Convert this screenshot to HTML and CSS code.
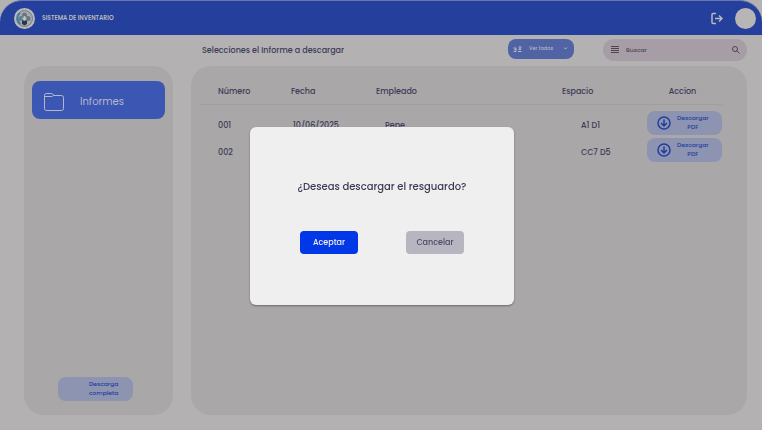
FILE: index.html
```html
<!DOCTYPE html>
<html lang="es">
<head>
<meta charset="utf-8">
<meta name="viewport" content="width=device-width, initial-scale=1">
<title>Sistema de Inventario</title>
<link rel="stylesheet" href="styles.css">
</head>
<body>
<header class="topbar">
  <svg class="logo" viewBox="0 0 42 42" aria-hidden="true">
    <circle cx="21" cy="21" r="21" fill="#bbb9ba"/>
    <circle cx="21" cy="21" r="16" fill="#a7abae" stroke="#6d7c87" stroke-width="2"/>
    <path d="M13 32A14 14 0 0 1 12 10" fill="none" stroke="#267da0" stroke-width="3"/>
    <circle cx="21" cy="14" r="5" fill="#687680"/>
    <circle cx="14" cy="21" r="5" fill="#5f7f8c"/>
    <circle cx="28" cy="21" r="5" fill="#687680"/>
    <path d="M16 25h10v7l-5 3-5-3z" fill="#26364c"/>
    <path d="M21 16v9M17 21h8" stroke="#c4c5c6" stroke-width="3"/>
  </svg>
  <h1 class="brand">SISTEMA DE INVENTARIO</h1>
  <button class="logout" type="button" aria-label="Salir">
    <svg viewBox="0 0 24 24" fill="none" stroke="currentColor" stroke-width="3"><path d="M10 2H4Q2 2 2 4v16q0 2 2 2h6M8 12h14M16 6l6 6-6 6"/></svg>
  </button>
  <span class="avatar"></span>
</header>
<div class="toolbar">
  <h2 class="title">Selecciones el Informe a descargar</h2>
  <label class="filter">
    <svg class="filter-icon" viewBox="0 0 18 12" fill="none" stroke="currentColor" stroke-width="2"><path d="M1 4h5v3H3h3v4H1M10 11h7M11 7h5"/><circle cx="14" cy="3" r="2"/></svg>
    <select class="filter-select" aria-label="Filtro"><option>Ver todos</option></select>
    <svg class="chevron" viewBox="0 0 10 6" fill="none" stroke="currentColor" stroke-width="2"><path d="M2 1l3 3 3-3"/></svg>
  </label>
  <label class="search">
    <svg class="menu-icon" viewBox="0 0 16 14" fill="none" stroke="currentColor" stroke-width="2"><path d="M0 1h16M0 5h16M0 9h16M0 13h16"/></svg>
    <input class="search-input" type="text" placeholder="Buscar" aria-label="Buscar">
    <svg class="search-icon" viewBox="0 0 16 16" fill="none" stroke="currentColor" stroke-width="2"><circle cx="6" cy="6" r="5"/><path d="M9 9l6 6"/></svg>
  </label>
</div>
<main class="layout">
  <nav class="panel sidebar">
    <a class="nav-link" href="#informes">
      <svg class="folder" viewBox="0 0 40 36" fill="none" stroke="currentColor" stroke-width="2"><path d="M1 5Q1 1 5 1h10q3 0 4 4h16q4 0 4 4v22q0 4-4 4H5q-4 0-4-4zM1 7h14q3 0 4-2"/></svg>
      Informes
    </a>
    <button class="pill full" type="button"><span>Descarga<br>completa</span></button>
  </nav>
  <section class="panel content">
    <table class="reports">
      <colgroup><col class="c-num"><col class="c-date"><col class="c-name"><col class="c-space"><col class="c-action"></colgroup>
      <thead>
        <tr><th class="num">Número</th><th>Fecha</th><th>Empleado</th><th>Espacio</th><th class="action">Accion</th></tr>
      </thead>
      <tbody>
        <tr>
          <td class="num">001</td><td class="date">10/06/2025</td><td class="name">Pepe</td><td class="space">A1 D1</td>
          <td class="action"><button class="pill" type="button"><svg class="download" viewBox="0 0 28 28" fill="none" stroke="currentColor" stroke-width="3"><circle cx="14" cy="14" r="12"/><path d="M14 7v13M8 14l6 6 6-6"/></svg><span>Descargar<br>PDF</span></button></td>
        </tr>
        <tr>
          <td class="num">002</td><td class="date">10/06/2025</td><td class="name">Pepe</td><td class="space">CC7 D5</td>
          <td class="action"><button class="pill" type="button"><svg class="download" viewBox="0 0 28 28" fill="none" stroke="currentColor" stroke-width="3"><circle cx="14" cy="14" r="12"/><path d="M14 7v13M8 14l6 6 6-6"/></svg><span>Descargar<br>PDF</span></button></td>
        </tr>
      </tbody>
    </table>
  </section>
</main>
<div class="overlay">
  <div class="modal" role="dialog" aria-modal="true" aria-labelledby="question">
    <p class="question" id="question">¿Deseas descargar el resguardo?</p>
    <div class="choices">
      <button class="choice accept" type="button">Aceptar</button>
      <button class="choice cancel" type="button">Cancelar</button>
    </div>
  </div>
</div>
</body>
</html>
```
FILE: styles.css
```css
* { box-sizing: border-box; }
body {
  margin: 0;
  min-height: 100vh;
  display: flex;
  flex-direction: column;
  background: #b3b1b2;
  color: #3c3b56;
  font: 500 8px/12px Poppins, Inter, sans-serif;
}
button, input, select { font: inherit; color: inherit; border: 0; margin: 0; }
button { cursor: pointer; }
svg { display: block; flex: none; }

.topbar {
  display: flex;
  align-items: center;
  height: 35px;
  padding: 0 6px 0 14px;
  background: #243f9c;
  border-top: 1px solid #6777ae;
  border-radius: 22px 22px 0 0;
  color: #bbb9ba;
}
.logo { width: 21px; height: 21px; }
.brand { margin: 0 auto 0 7px; font-size: 6px; font-weight: 600; }
.logout { padding: 0; margin-right: 12px; background: none; }
.logout svg { width: 12px; height: 13px; }
.avatar { width: 21px; height: 21px; border-radius: 50%; background: #b7b5b6; }

.toolbar {
  display: flex;
  align-items: center;
  height: 31px;
  padding: 0 15px 0 202px;
}
.title { margin: 0 auto 0 0; font-size: 8px; font-weight: 500; }
.filter {
  display: flex;
  align-items: center;
  width: 66px;
  height: 20px;
  margin: 0 29px 4px 0;
  padding: 0 4px 0 5px;
  border-radius: 8px;
  background: #5063a4;
  color: #b7b7c3;
  font-size: 5px;
}
.filter-icon { width: 9px; height: 6px; }
.filter-select { flex: 1; min-width: 0; padding: 0 0 0 7px; appearance: none; background: none; }
.chevron { width: 5px; height: 3px; margin-right: 2px; }
.search {
  display: flex;
  align-items: center;
  width: 144px;
  height: 22px;
  margin-bottom: 2px;
  padding: 0 7px 0 8px;
  border-radius: 11px;
  background: #a69da6;
  color: #4c484e;
  font-size: 6px;
}
.menu-icon { width: 8px; height: 7px; }
.search-input { flex: 1; min-width: 0; padding: 0 7px; background: none; }
.search-input::placeholder { color: inherit; opacity: 1; }
.search-icon { width: 8px; height: 8px; }

.layout {
  flex: 1;
  display: grid;
  grid-template-columns: 149px 1fr;
  gap: 18px;
  padding: 0 15px 15px 24px;
}
.panel { border-radius: 20px; background: #a9a7a8; }
.sidebar {
  display: flex;
  flex-direction: column;
  justify-content: space-between;
  padding: 15px 8px 14px;
}
.nav-link {
  display: flex;
  align-items: center;
  gap: 16px;
  height: 38px;
  padding: 3px 0 0 12px;
  border-radius: 8px;
  background: #3c56b4;
  color: #b5b8c8;
  font-size: 10px;
  font-weight: 400;
  text-decoration: none;
}
.folder { width: 20px; height: 18px; }
.pill {
  display: flex;
  align-items: center;
  gap: 6px;
  width: 75px;
  height: 24px;
  padding: 0 10px;
  border-radius: 8px;
  background: #8d94b1;
  color: #233d9c;
  font-size: 6px;
  font-weight: 500;
  line-height: 9px;
}
.full { margin-left: 26px; padding-left: 31px; }
.download { width: 14px; height: 14px; }

.content { padding: 14px 25px 0 9px; }
.reports { width: 100%; border-collapse: collapse; table-layout: fixed; }
.c-num { width: 91px; }
.c-date { width: 85px; }
.c-space { width: 81px; }
.c-action { width: 79px; }
.reports th { height: 24px; padding: 0; border-bottom: 1px solid #a09ea0; font-weight: 500; text-align: left; }
.reports td { height: 27px; padding: 6px 0 0; }
.reports tbody::before { content: ""; display: block; height: 5px; }
.reports .num { padding-left: 18px; }
.reports .date { padding-left: 2px; }
.reports .name { padding-left: 9px; }
.reports .space { padding-left: 19px; }
.reports th.action { text-align: center; }
.reports td.action { padding: 0 0 0 4px; }

.overlay {
  position: fixed;
  inset: 0;
  display: grid;
  place-items: center;
  padding: 2px 0 0 2px;
}
.modal {
  display: flex;
  flex-direction: column;
  align-items: center;
  width: 264px;
  padding: 52px 50px 51px;
  border-radius: 6px;
  background: #efefef;
  box-shadow: 0 1px 2px #6b696a;
}
.question { margin: 0 0 36px; font-size: 10px; font-weight: 500; line-height: 16px; white-space: nowrap; }
.choices { display: flex; justify-content: space-between; width: 100%; }
.choice { width: 58px; height: 23px; padding: 0; border-radius: 4px; }
.accept { background: #0037e6; color: #efefef; }
.cancel { background: #b7b5c0; color: #4b4a66; }
```
